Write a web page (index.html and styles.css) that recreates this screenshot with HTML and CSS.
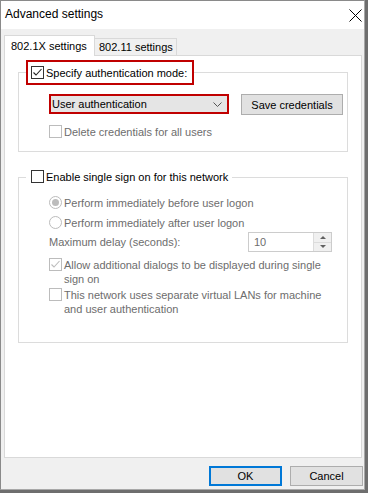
FILE: index.html
```html
<!DOCTYPE html>
<html lang="en">

<head>
    <meta charset="UTF-8" />
    <title>Advanced settings</title>
    <link rel="stylesheet" href="styles.css">
</head>

<body>
    <div class="window">
        <div class="titlebar">
            <span class="title">Advanced settings</span>
            <svg class="close" width="13" height="13" viewBox="0 0 13 13">
                <path d="M0.5 0.5 L12.5 12.5 M12.5 0.5 L0.5 12.5" stroke="#000" stroke-width="1" fill="none" />
            </svg>
        </div>

        <div class="main">
            <div class="tabs">
                <div class="tab active">802.1X settings</div>
                <div class="tab">802.11 settings</div>
            </div>

            <div class="panel">
                <fieldset class="group group-auth">
                    <legend class="highlight">
                        <span class="check">
                            <span class="box">
                                <svg width="11" height="11" viewBox="0 0 11 11">
                                    <path d="M1.5 5.5 L4 8 L9.5 2" stroke="#222" stroke-width="1.1" fill="none" />
                                </svg>
                            </span>
                            <span>Specify authentication mode:</span>
                        </span>
                    </legend>
                    <div class="group-body">
                        <div class="row">
                            <div class="select">
                                <span>User authentication</span>
                                <svg width="9" height="5" viewBox="0 0 9 5">
                                    <path d="M0.5 0.5 L4.5 4.5 L8.5 0.5" stroke="#555" stroke-width="1" fill="none" />
                                </svg>
                            </div>
                            <button type="button" class="btn save-btn">Save credentials</button>
                        </div>
                        <div class="check disabled delete-row">
                            <span class="box"></span>
                            <span>Delete credentials for all users</span>
                        </div>
                    </div>
                </fieldset>

                <fieldset class="group group-sso">
                    <legend class="plain">
                        <span class="check">
                            <span class="box"></span>
                            <span>Enable single sign on for this network</span>
                        </span>
                    </legend>
                    <div class="group-body">
                        <div class="check disabled radio-first">
                            <span class="radio on"></span>
                            <span>Perform immediately before user logon</span>
                        </div>
                        <div class="check disabled radio-second">
                            <span class="radio"></span>
                            <span>Perform immediately after user logon</span>
                        </div>
                        <div class="delay-row">
                            <span class="muted">Maximum delay (seconds):</span>
                            <div class="spinner">
                                <span class="spin-value">10</span>
                                <div class="spin-buttons">
                                    <span class="spin-up"></span>
                                    <span class="spin-down"></span>
                                </div>
                            </div>
                        </div>
                        <div class="check disabled dialogs-row">
                            <span class="box">
                                <svg width="11" height="11" viewBox="0 0 11 11">
                                    <path d="M1.5 5.5 L4 8 L9.5 2" stroke="#bcbcbc" stroke-width="1.1" fill="none" />
                                </svg>
                            </span>
                            <span>Allow additional dialogs to be displayed during single<br>sign on</span>
                        </div>
                        <div class="check disabled vlan-row">
                            <span class="box"></span>
                            <span>This network uses separate virtual LANs for machine<br>and user authentication</span>
                        </div>
                    </div>
                </fieldset>
            </div>

            <div class="footer">
                <button type="button" class="btn default">OK</button>
                <button type="button" class="btn">Cancel</button>
            </div>
        </div>
    </div>
</body>

</html>
```

FILE: styles.css
```css
:root {
    --face: #f0f0f0;
    --line: #d9d9d9;
    --group-line: #dcdcdc;
    --highlight: #c00000;
    --muted: #6d6d6d;
    --muted-box: #bcbcbc;
    --button: #e1e1e1;
    --button-line: #adadad;
    --focus: #0078d7;
}

* {
    box-sizing: border-box;
}

html,
body {
    margin: 0;
}

body {
    width: 368px;
    height: 493px;
    background: #6e6e6e;
    font-family: "Liberation Sans", Arial, sans-serif;
    font-size: 11px;
    line-height: 14px;
    color: #000;
    white-space: nowrap;
}

.window {
    width: 365px;
    height: 490px;
    border: 1px solid #8a8a8a;
    border-right-color: #a8a8a8;
    border-bottom-color: #a8a8a8;
    background: var(--face);
    display: flex;
    flex-direction: column;
}

.titlebar {
    height: 28px;
    flex: none;
    background: #fff;
    display: flex;
    justify-content: space-between;
    align-items: flex-start;
    padding: 0 2px 0 4px;
}

.title {
    margin-top: 6px;
    font-size: 12px;
}

.close {
    margin-top: 8px;
}

.main {
    flex: 1;
    display: flex;
    flex-direction: column;
    padding: 6px 0 0 3px;
}

/* tabs */
.tabs {
    height: 21px;
    margin-bottom: -1px;
    display: flex;
    align-items: flex-end;
    position: relative;
    z-index: 1;
}

.tab {
    height: 17px;
    width: 82px;
    margin-bottom: 1px;
    border: 1px solid var(--line);
    border-bottom: none;
    border-left: none;
    background: var(--face);
    padding-left: 4px;
    line-height: 17px;
}

.tab.active {
    height: 21px;
    width: 91px;
    margin-bottom: 0;
    border-left: 1px solid var(--line);
    background: #fff;
    padding-left: 6px;
    line-height: 20px;
}

.panel {
    width: 358px;
    height: 403px;
    flex: none;
    background: #fff;
    border: 1px solid var(--line);
    padding: 4px 13px 0 13px;
}

/* group boxes */
.group {
    margin: 0;
    min-width: 0;
    border: 1px solid var(--group-line);
    padding: 0 0 12px 7px;
}

.group legend {
    padding: 0;
}

.highlight {
    height: 25px;
    border: 2px solid var(--highlight);
    display: flex;
    align-items: center;
}

.highlight .check {
    padding: 0 5px 0 3px;
}

.plain .check {
    padding: 0 4px 0 5px;
}

.group-sso {
    margin-top: 18px;
    padding-bottom: 26px;
}

.group-body {
    padding-left: 23px;
}

.group-sso .group-body {
    padding-right: 15px;
}

.check {
    display: flex;
    align-items: flex-start;
}

.box {
    width: 13px;
    height: 13px;
    flex: none;
    margin-right: 2px;
    border: 1px solid #333;
    background: #fff;
    display: flex;
}

.radio {
    width: 13px;
    height: 13px;
    flex: none;
    margin-right: 2px;
    border: 1px solid var(--muted-box);
    border-radius: 50%;
    display: flex;
    align-items: center;
    justify-content: center;
}

.radio.on::after {
    content: "";
    width: 7px;
    height: 7px;
    border-radius: 50%;
    background: var(--muted-box);
}

.disabled,
.muted {
    color: var(--muted);
}

.disabled .box {
    border-color: var(--muted-box);
}

.row {
    margin-top: 9px;
    display: flex;
    gap: 12px;
}

.select {
    width: 180px;
    height: 20px;
    border: 2px solid var(--highlight);
    background: #e5e5e5;
    display: flex;
    align-items: center;
    justify-content: space-between;
    padding: 0 5px 0 1px;
}

.btn {
    height: 21px;
    padding: 0;
    border: 1px solid var(--button-line);
    background: var(--button);
    font: inherit;
    color: #000;
}

.save-btn {
    width: 102px;
}

.delete-row {
    margin-top: 10px;
}

.radio-first {
    margin-top: 12px;
}

.radio-second {
    margin-top: 6px;
}

.delay-row {
    margin-top: 2px;
    height: 20px;
    display: flex;
    align-items: center;
    justify-content: space-between;
}

.spinner {
    width: 84px;
    height: 20px;
    border: 1px solid #cccccc;
    display: flex;
    justify-content: space-between;
}

.spin-value {
    padding-left: 5px;
    line-height: 18px;
    color: var(--muted);
}

.spin-buttons {
    width: 18px;
    border-left: 1px solid #dcdcdc;
    display: flex;
    flex-direction: column;
}

.spin-up,
.spin-down {
    flex: 1;
    background: #f0f0f0;
    display: flex;
    align-items: center;
    justify-content: center;
}

.spin-up {
    border-bottom: 1px solid #dcdcdc;
}

.spin-up::after {
    content: "";
    border: 3px solid transparent;
    border-top: none;
    border-bottom: 3px solid #606060;
}

.spin-down::after {
    content: "";
    border: 3px solid transparent;
    border-bottom: none;
    border-top: 3px solid #606060;
}

.dialogs-row {
    margin-top: 6px;
}

.vlan-row {
    margin-top: 2px;
}

.footer {
    flex: 1;
    display: flex;
    justify-content: flex-end;
    align-items: flex-start;
    gap: 8px;
    padding: 8px 1px 0 0;
}

.footer .btn {
    width: 73px;
    height: 20px;
}

.btn.default {
    border: 2px solid var(--focus);
}
```
